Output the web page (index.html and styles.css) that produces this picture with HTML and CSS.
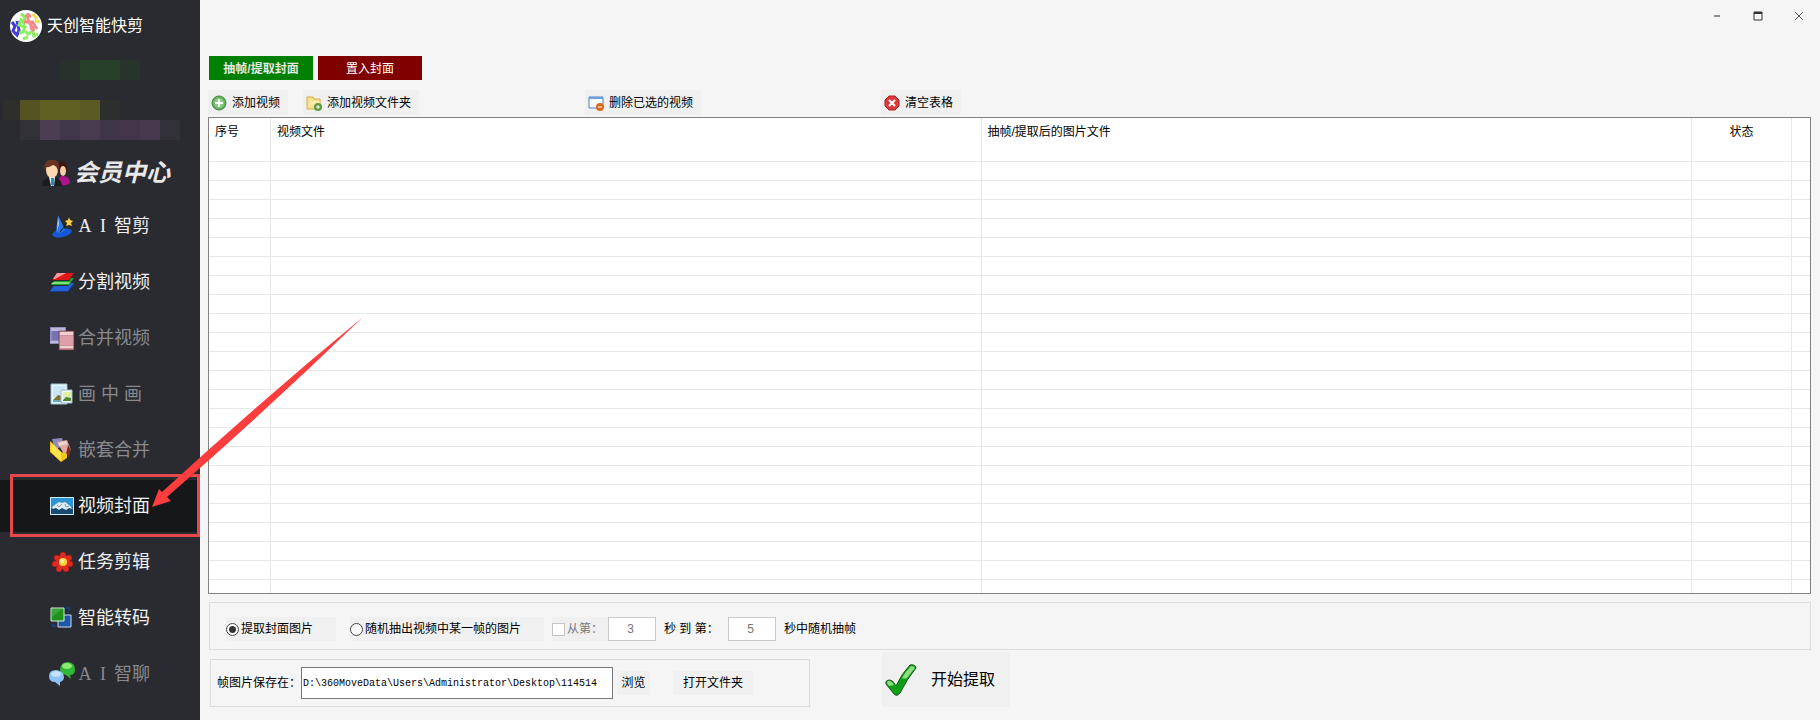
FILE: index.html
```html
<!DOCTYPE html>
<html lang="zh-CN">
<head>
    <meta charset="UTF-8">
    <meta name="viewport" content="width=device-width, initial-scale=1.0">
    <title>天创智能快剪</title>
    <link rel="stylesheet" href="styles.css">
</head>
<body>

<div class="app">
    <!-- Sidebar -->
    <aside class="sidebar">
        <div class="brand">
            <svg class="logo" viewBox="0 0 32 32">
                <circle cx="16" cy="16" r="16" fill="#fff"/>
                <g fill="none" stroke-width="3">
                    <path d="M2 12l3 4-2 5 4 4 2-5-2-9" stroke="#4038e0"/>
                    <path d="M11 4l4 3-1 6-3-3-2 5 6 2-2 5-4 1" stroke="#86f05a"/>
                    <path d="M15 21l3 3 5-3 1 5 4-2M13 29l5-2" stroke="#8cf060"/>
                    <path d="M15 6h6M18 3v8M14 12h9M19 12l5 9M22 11l5 8M26 15l-6 4" stroke="#f48a8a"/>
                    <path d="M23 4l4 5M25 11l5 1" stroke="#f0dc50"/>
                </g>
            </svg>
            <span>天创智能快剪</span>
        </div>

        <div class="account">
            <div class="mask mask-green"></div>
            <div class="mask mask-yellow"></div>
            <div class="mask mask-purple"></div>
        </div>

        <a href="#member" class="member">
            <svg class="member-icon" viewBox="0 0 28 28">
                <path d="M17 21q1-5 5-4 6 1 6 7-4 3-9 2z" fill="#b0148c"/>
                <path d="M16 10q0-8 5-8 6 1 4 9l-2 5-5-1z" fill="#3b1a14"/>
                <ellipse cx="21" cy="12" rx="3" ry="5" fill="#f6cfa5"/>
                <path d="M0 27q0-7 6-8h8q6 2 6 8z" fill="#1c1c1f"/>
                <path d="M7 18h6l-1 9H9z" fill="#e8f4fa"/>
                <path d="M9 19h3v7l-1 1-2-1z" fill="#2390bd"/>
                <ellipse cx="10" cy="11" rx="6" ry="8" fill="#fbd8b0"/>
                <path d="M3 12q-2-10 5-11 10-2 9 8l-1 3q-1-5-5-6-5 3-7 2z" fill="#6b3420"/>
            </svg>
            <span>会员中心</span>
        </a>

        <nav class="menu">
            <a href="#ai-cut" class="menu-item">
                <svg class="icon" viewBox="0 0 24 24">
                    <ellipse cx="12" cy="19" rx="10" ry="4" fill="#1558d6" transform="rotate(-12 12 19)"/>
                    <path d="M8 1l7 15q-4 4-9 2z" fill="#2878ee"/>
                    <path d="M8 3l1 7-2 7z" fill="#b9dcff"/>
                    <path d="M10 18l8-10" stroke="#111" stroke-width="1"/>
                    <path d="M19 3l1 3 3 1-2 2 1 3-3-1-3 1 1-3-2-2 3-1z" fill="#ffcd45"/>
                </svg>
                <span class="latin">A</span><span class="latin">I</span><span>智剪</span>
            </a>
            <a href="#split" class="menu-item">
                <svg class="icon" viewBox="0 0 24 24">
                    <path d="M6 13h18l-6 8H0z" fill="#2462d8"/>
                    <path d="M0 21h18l6-8v2l-6 7H0z" fill="#123b92"/>
                    <path d="M5 9h19l-6 7H0z" fill="#2a2b30"/>
                    <path d="M7 8h17l-5 7H1z" fill="#20a32a"/>
                    <path d="M1 14l2-2h17l-1 2z" fill="#7fe07f"/>
                    <path d="M6 4h18l-5 7H2z" fill="#2a2b30"/>
                    <path d="M7 3h17l-5 7H2z" fill="#dc1818"/>
                    <path d="M7 3h9L5 9H3z" fill="#ff9a9a"/>
                </svg>
                <span>分割视频</span>
            </a>
            <a href="#merge" class="menu-item disabled">
                <svg class="icon" viewBox="0 0 24 24">
                    <path d="M0 1h16v17H0z" fill="#918dbd"/>
                    <path d="M1 2h14v3H1zM0 15h16v2H0z" fill="#bbb7da"/>
                    <path d="M2 5h12v9H2z" fill="#7773b2"/>
                    <path d="M9 5h15v19H9z" fill="#ce8f98" stroke="#5b3030" stroke-width=".6"/>
                    <path d="M10 6h13v3H10zM10 20h13v2H10z" fill="#efd0d0"/>
                    <path d="M10 10h13v9H10z" fill="#dda0aa"/>
                </svg>
                <span>合并视频</span>
            </a>
            <a href="#pip" class="menu-item disabled">
                <svg class="icon" viewBox="0 0 24 24">
                    <path d="M1 2h16v20H1z" fill="#e8f7fb" stroke="#9cc2d2"/>
                    <path d="M3 4h12v11H3z" fill="#c9e7f5"/>
                    <path d="M3 18l5-5 7 2v4H3z" fill="#7c7632"/>
                    <path d="M3 18h12v2H3z" fill="#68a6bd"/>
                    <path d="M11 8h11v13H11z" fill="#f5fdf9" stroke="#97b8c3"/>
                    <path d="M13 10h8v6h-8z" fill="#d5edb9"/>
                    <path d="M13 18l3-3 5 1v3h-8z" fill="#4b832e"/>
                    <circle cx="17" cy="12" r="2" fill="#f2ed87"/>
                </svg>
                <span>画 中 画</span>
            </a>
            <a href="#nest" class="menu-item disabled">
                <svg class="icon" viewBox="0 0 24 24">
                    <path d="M2 1l10-1 2 7-9 5z" fill="#8d89b8"/>
                    <path d="M7 4l10-2 4 10-6 6z" fill="#e0aaa6"/>
                    <path d="M8 5l8-2 1 3-8 2z" fill="#efd6d2"/>
                    <path d="M18 7l3 5-2 6-3-2z" fill="#7d2f1f"/>
                    <path d="M0 3l11 11 6 2v4l-6 4L0 14z" fill="#f6c80f"/>
                    <path d="M1 4l10 10v9L1 14z" fill="#ffe552"/>
                </svg>
                <span>嵌套合并</span>
            </a>
            <div class="active-row">
                <a href="#cover" class="menu-item active">
                    <svg class="icon" viewBox="0 0 24 24">
                        <path d="M0 3h24v18H0z" fill="#2c94d2"/>
                        <path d="M1 15l5-2h17v7H1z" fill="#164a70"/>
                        <path d="M2 13l4-3 3-2 3 1 3-1 4 3 4 4-4-1-3 2-4-2-3 2-3-2-3 1z" fill="#dfeaf0"/>
                        <path d="M7 11l2 2 3-3M15 10l1 3 3-1" fill="none" stroke="#7aa0ba"/>
                        <path d="M.5 3.500h23v17H.5z" fill="none" stroke="#d4edfa"/>
                    </svg>
                    <span>视频封面</span>
                </a>
                <svg class="arrow" viewBox="0 0 212 192">
                    <path d="M211 0Q110 83 10 175L7 172 0 190l19-6-4-4Q115 93 211 0z" fill="#fb3d3d"/>
                </svg>
            </div>
            <a href="#tasks" class="menu-item">
                <svg class="icon" viewBox="0 0 24 24">
                    <g fill="#e02b20" stroke="#8d130d" stroke-width=".5">
                        <circle cx="13" cy="5" r="3"/><circle cx="19" cy="8" r="3"/>
                        <circle cx="20" cy="14" r="3"/><circle cx="16" cy="19" r="3"/>
                        <circle cx="9" cy="19" r="3"/><circle cx="5" cy="14" r="3"/>
                        <circle cx="7" cy="8" r="3"/>
                    </g>
                    <circle cx="13" cy="12" r="7" fill="#e02b20"/>
                    <circle cx="13" cy="12" r="4" fill="#ffd23b"/>
                    <circle cx="12" cy="11" r="2" fill="#fff0a0"/>
                </svg>
                <span>任务剪辑</span>
            </a>
            <a href="#transcode" class="menu-item">
                <svg class="icon" viewBox="0 0 24 24">
                    <path d="M8 9h13v12H8z" fill="#1d57a8" stroke="#c9dcf0"/>
                    <path d="M1 2h13v13H1z" fill="#1f911f" stroke="#d7efd7"/>
                    <path d="M2 3h10L2 11z" fill="#3aa63a"/>
                    <path d="M16 2h3v3M18 6v1M3 18v2h3" fill="none" stroke="#173e85" stroke-width="2"/>
                </svg>
                <span>智能转码</span>
            </a>
            <a href="#ai-chat" class="menu-item disabled">
                <svg class="icon" viewBox="0 0 24 24">
                    <path d="M10 7q1-7 8-7 7 1 7 7t-5 6l1 4-5-4q-6-1-6-6z" fill="#30b736"/>
                    <ellipse cx="17" cy="4" rx="5" ry="3" fill="#90e877"/>
                    <path d="M-1 14q0-6 7-6 8 1 8 7 0 4-4 5v4l-5-4q-6 0-6-6z" fill="#8cc2f4"/>
                    <ellipse cx="6" cy="12" rx="5" ry="3" fill="#c4e3ff"/>
                </svg>
                <span class="latin">A</span><span class="latin">I</span><span>智聊</span>
            </a>
        </nav>
    </aside>

    <!-- Main window -->
    <main class="main">
        <div class="window-controls">
            <button type="button" aria-label="最小化">
                <svg viewBox="0 0 10 10"><path d="M2 5h6" stroke="#222"/></svg>
            </button>
            <button type="button" aria-label="最大化">
                <svg viewBox="0 0 10 10"><path d="M1 1h8v8H1z" fill="none" stroke="#333"/><path d="M1 2h8" stroke="#333" stroke-width="2"/></svg>
            </button>
            <button type="button" aria-label="关闭">
                <svg viewBox="0 0 10 10"><path d="M1 1l8 8M9 1L1 9" stroke="#555"/></svg>
            </button>
        </div>

        <div class="tabs">
            <button type="button" class="tab tab-extract">抽帧/提取封面</button>
            <button type="button" class="tab tab-insert">置入封面</button>
        </div>

        <div class="toolbar">
            <button type="button" class="tool">
                <svg viewBox="0 0 16 16">
                    <circle cx="8" cy="8" r="7" fill="#62b05b" stroke="#3f8a42"/>
                    <circle cx="8" cy="8" r="5" fill="#8acb80"/>
                    <path d="M8 4v8M4 8h8" stroke="#fff" stroke-width="2"/>
                </svg>
                添加视频
            </button>
            <button type="button" class="tool tool-folder">
                <svg viewBox="0 0 16 16">
                    <path d="M1 2h6l1 2h6v10H1z" fill="#f9e08a" stroke="#d9ab4c"/>
                    <path d="M4 7h10M3 9h7" stroke="#fff6cc"/>
                    <circle cx="12" cy="12" r="4" fill="#5f9c3f"/>
                    <path d="M12 10v4M10 12h4" stroke="#fff"/>
                </svg>
                添加视频文件夹
            </button>
            <button type="button" class="tool tool-delete">
                <svg viewBox="0 0 16 16">
                    <path d="M1 2h14v11H1z" fill="#f4faff" stroke="#4b7fc4"/>
                    <path d="M1 3h14" stroke="#6d9fe0" stroke-width="2"/>
                    <circle cx="12" cy="12" r="4" fill="#d96a1c"/>
                    <path d="M10 12h4" stroke="#fff"/>
                </svg>
                删除已选的视频
            </button>
            <button type="button" class="tool tool-clear">
                <svg viewBox="0 0 16 16">
                    <path d="M5 1h6l4 4v6l-4 4H5l-4-4V5z" fill="#dc3a3a" stroke="#b31f1f"/>
                    <path d="M5 5l6 6M11 5l-6 6" stroke="#fff" stroke-width="2"/>
                </svg>
                清空表格
            </button>
        </div>

        <div class="grid">
            <table>
                <colgroup>
                    <col class="col-no">
                    <col>
                    <col>
                    <col class="col-status">
                    <col class="col-end">
                </colgroup>
                <thead>
                    <tr>
                        <th>序号</th>
                        <th>视频文件</th>
                        <th>抽帧/提取后的图片文件</th>
                        <th class="center">状态</th>
                        <th></th>
                    </tr>
                </thead>
                <tbody id="rows"></tbody>
            </table>
        </div>

        <!-- Extract options -->
        <form class="panel options">
            <label class="choice choice-cover"><input type="radio" name="mode" checked>提取封面图片</label>
            <label class="choice choice-random"><input type="radio" name="mode">随机抽出视频中某一帧的图片</label>
            <label class="choice choice-range"><input type="checkbox" disabled>从第：</label>
            <input type="text" class="seconds" id="from" value="3" disabled aria-label="开始秒">
            <label class="range-text range-to" for="to">秒 到 第：</label>
            <input type="text" class="seconds" id="to" value="5" disabled>
            <span class="range-text">秒中随机抽帧</span>
        </form>

        <!-- Output folder and start -->
        <div class="footer">
            <div class="panel output">
                <label for="path">帧图片保存在：</label>
                <input type="text" id="path" class="path" value="D:\360MoveData\Users\Administrator\Desktop\114514">
                <button type="button" class="browse">浏览</button>
                <button type="button" class="open-folder">打开文件夹</button>
            </div>
            <button type="button" class="start">
                <svg viewBox="0 0 32 32">
                    <path d="M1 20q-1-4 4-4 3 0 6 6Q17 9 25 1q5-1 6 3Q22 15 15 29q-3 4-6 1-4-5-8-10z" fill="#0ca012" stroke="#17551a"/>
                    <path d="M2 19q0-3 3-2 3 1 4 4l-5 1zM17 14q4-7 9-12 3 0 4 2-5 6-8 10-2 1-5 0z" fill="#8bdc82"/>
                </svg>
                开始提取
            </button>
        </div>
    </main>
</div>

<script>
// Fill the grid with empty rows
const rows = document.getElementById('rows');
for (let i = 0; i < 60; i++) {
    const row = rows.insertRow();
    for (let j = 0; j < 5; j++) {
        row.insertCell();
    }
}
</script>

</body>
</html>
```
FILE: styles.css
```css
/* Base Styles */
* {
    margin: 0;
    padding: 0;
    box-sizing: border-box;
}

body {
    font-family: "Liberation Sans", "Noto Sans CJK SC", sans-serif;
    font-size: 12px;
    line-height: 16px;
    color: #000;
    background: #f5f5f5;
}

button,
input {
    font: inherit;
    color: inherit;
}

button {
    border: none;
    background: #f0f0f0;
    white-space: nowrap;
}

a {
    color: inherit;
    text-decoration: none;
}

.app {
    display: flex;
    height: 100vh;
    overflow: hidden;
}

/* Sidebar */
.sidebar {
    position: relative;
    z-index: 1;
    flex: 0 0 200px;
    background: #2a2b30;
    color: #fff;
}

.brand {
    display: flex;
    align-items: center;
    gap: 5px;
    height: 52px;
    padding-left: 10px;
    font-size: 16px;
}

.logo {
    width: 32px;
    height: 32px;
}

.account {
    padding-top: 8px;
}

.mask {
    height: 20px;
}

.mask-green {
    margin-bottom: 20px;
    background: linear-gradient(90deg, transparent 60px, #28302c 60px 80px, #264128 80px 120px, #28332c 120px 140px, transparent 140px);
}

.mask-yellow {
    background: linear-gradient(90deg, transparent 3px, #2e2e2c 3px 20px, #545423 20px 40px, #606023 40px 80px, #595a24 80px 100px, #2d2e2e 100px 120px, transparent 120px);
}

.mask-purple {
    background: linear-gradient(90deg, transparent 20px, #333138 20px 40px, #4b3e50 40px 60px, #41374a 60px 80px, #483b4d 80px 100px, #40364a 100px 120px, #43364a 120px 140px, #49394f 140px 160px, #323137 160px 180px, transparent 180px);
}

.member {
    display: flex;
    align-items: center;
    gap: 4px;
    height: 60px;
    padding: 6px 0 0 42px;
    font-size: 24px;
    font-style: italic;
    font-weight: bold;
    line-height: 32px;
    color: #e8e8e8;
}

.member-icon {
    width: 28px;
    height: 28px;
}

.menu {
    display: flex;
    flex-direction: column;
    gap: 4px;
}

.menu-item {
    display: flex;
    align-items: center;
    gap: 4px;
    height: 52px;
    padding-left: 50px;
    font-size: 18px;
    color: #f0f0f0;
    white-space: nowrap;
}

.menu-item.disabled {
    color: #88898c;
}

.menu-item.active {
    background: #161719;
}

.icon {
    flex: none;
    width: 24px;
    height: 24px;
    overflow: visible;
}

.latin {
    width: 14px;
    font-family: "Liberation Serif", serif;
    text-align: center;
}

/* Callout on the current page */
.active-row {
    position: relative;
}

.active-row::after {
    content: "";
    position: absolute;
    inset: -6px 0 -5px 10px;
    border: 3px solid #e5484a;
    pointer-events: none;
}

.arrow {
    position: absolute;
    z-index: 1;
    left: 152px;
    bottom: 23px;
    width: 212px;
    height: 192px;
    pointer-events: none;
}

/* Main window */
.main {
    display: flex;
    flex: 1;
    flex-direction: column;
    min-width: 0;
    padding: 0 9px 13px 8px;
}

.window-controls {
    display: flex;
    justify-content: flex-end;
    height: 56px;
}

.window-controls button {
    width: 41px;
    height: 33px;
    background: none;
}

.window-controls button:last-child {
    width: 24px;
    margin-left: 9px;
}

.window-controls svg {
    width: 10px;
    height: 10px;
}

.tabs {
    display: flex;
    gap: 5px;
    padding-left: 1px;
}

.tab {
    width: 104px;
    height: 24px;
    padding-top: 1px;
    color: #fff;
}

.tab-extract {
    background: #008000;
    font-weight: bold;
    color: #e6e6e6;
}

.tab-insert {
    background: #800000;
}

.toolbar {
    display: flex;
    margin: 10px 0 2px;
}

.tool {
    display: flex;
    align-items: center;
    gap: 5px;
    height: 25px;
    padding: 1px 8px 0 3px;
}

.tool svg {
    width: 16px;
    height: 16px;
}

.tool-folder {
    margin-left: 15px;
}

.tool-delete {
    margin-left: 166px;
}

.tool-clear {
    margin-left: 180px;
}

/* Grid */
.grid {
    flex: 1;
    min-height: 0;
    overflow: hidden;
    border: 1px solid #828282;
    background: #fff;
}

.grid table {
    width: 100%;
    table-layout: fixed;
    border-collapse: separate;
    border-spacing: 0;
}

.grid th,
.grid td {
    border-right: 1px solid #e8e8e8;
    border-bottom: 1px solid #e8e8e8;
}

.grid th:last-child,
.grid td:last-child {
    border-right: none;
}

.grid th {
    height: 44px;
    padding: 6px;
    font-weight: normal;
    text-align: left;
    vertical-align: top;
}

.grid th.center {
    text-align: center;
}

.grid td {
    height: 19px;
}

.col-no {
    width: 62px;
}

.col-status {
    width: 100px;
}

.col-end {
    width: 18px;
}

/* Panels */
.panel {
    display: flex;
    align-items: center;
    height: 48px;
    border: 1px solid #dcdcdc;
    white-space: nowrap;
}

.options {
    margin: 8px 0 2px 1px;
    padding: 6px 0 0 16px;
}

.choice {
    display: flex;
    align-items: center;
    gap: 2px;
    height: 24px;
    background: #f0f0f0;
}

.choice-cover {
    width: 110px;
    margin-right: 14px;
}

.choice-random {
    width: 194px;
    margin-right: 8px;
}

.choice-range {
    width: 56px;
    color: #777;
}

.choice input {
    appearance: none;
    width: 13px;
    height: 13px;
    border: 1px solid #444;
    background: #fff;
}

.choice input[type="radio"] {
    border-radius: 50%;
}

.choice input[type="radio"]:checked {
    background: radial-gradient(circle, #333 3px, #fff 4px);
}

.choice input[type="checkbox"] {
    border-color: #c4c4c4;
}

.seconds {
    width: 48px;
    height: 24px;
    border: 1px solid #c8c8c8;
    background: #fff;
    padding-right: 3px;
    color: #777;
    text-align: center;
}

.range-text {
    margin-left: 8px;
}

.range-to {
    width: 64px;
}

.footer {
    display: flex;
    align-items: flex-end;
    gap: 72px;
    padding-left: 2px;
}

.output {
    width: 600px;
    padding-left: 6px;
}

.output label {
    width: 84px;
}

.path {
    width: 312px;
    height: 32px;
    padding: 0 1px;
    border: 1px solid #777;
    background: #fff;
    font-family: "Liberation Mono", monospace;
    font-size: 10px;
}

.browse {
    width: 33px;
    height: 24px;
    margin: 0 23px 0 4px;
}

.open-folder {
    width: 80px;
    height: 24px;
}

.start {
    display: flex;
    align-items: center;
    gap: 14px;
    width: 128px;
    height: 55px;
    padding-left: 3px;
    font-size: 16px;
}

.start svg {
    width: 32px;
    height: 32px;
}
```
